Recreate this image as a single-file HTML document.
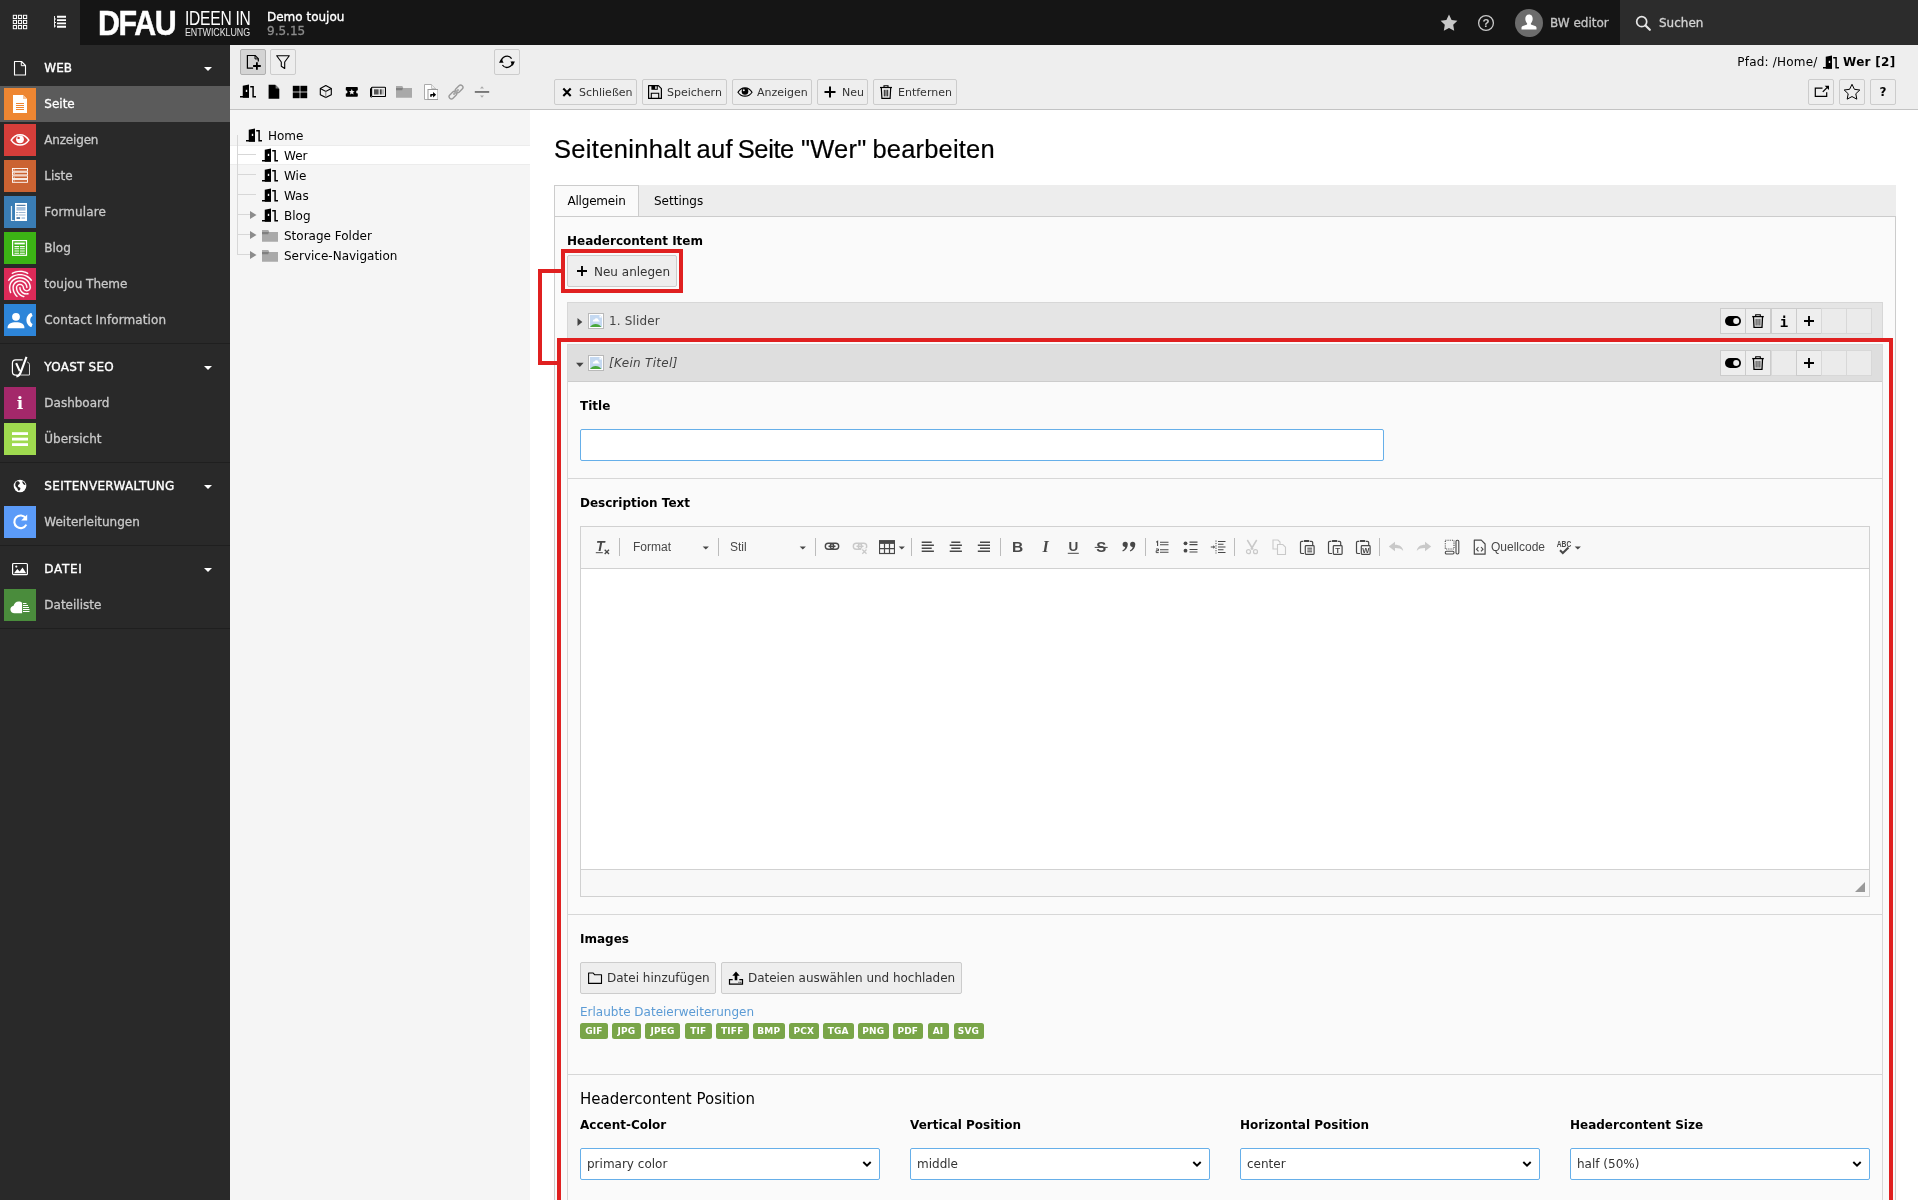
<!DOCTYPE html>
<html lang="de">
<head>
<meta charset="utf-8">
<title>Demo toujou [TYPO3 CMS 9.5.15]</title>
<style>
*{box-sizing:border-box;margin:0;padding:0}
html,body{width:1918px;height:1200px;overflow:hidden;background:#fff}
body{font-family:"DejaVu Sans","Liberation Sans",sans-serif;font-size:12px;line-height:18px;color:#000;position:relative}
.abs{position:absolute}
svg{display:block}
/* ---------- topbar ---------- */
#topbar{position:absolute;left:0;top:0;width:1918px;height:45px;background:#151515}
#tb-left{position:absolute;left:0;top:0;width:80px;height:45px;background:#292929}
#site{position:absolute;left:267px;top:10px;color:#fff;font-size:12px;line-height:14px;-webkit-text-stroke:.35px #fff}
#site span{display:block;color:#8c8c8c;-webkit-text-stroke:.3px #8c8c8c}
#user{-webkit-text-stroke:.3px #c5c5c5;position:absolute;left:1550px;top:0;line-height:47px;color:#c5c5c5;font-size:12px}
#search{position:absolute;left:1620px;top:0;width:298px;height:45px;background:#2c2c2c}
#search span{-webkit-text-stroke:.3px #d4d4d4;position:absolute;left:39px;top:0;line-height:47px;color:#d4d4d4;font-size:12px}
/* ---------- module menu ---------- */
#menu{position:absolute;left:0;top:45px;width:230px;height:1155px;background:#292929;color:#fff}
.grp{border-bottom:1px solid #1f1f1f;padding-bottom:5px;position:relative}
.gh{height:41px;position:relative;font-size:12px;line-height:46px;padding-left:44.300px;-webkit-text-stroke:.35px #fff}
.gh .ic{position:absolute;left:12px;top:15px;width:16px;height:16px}
.gh .car{position:absolute;left:204px;top:22px;width:0;height:0;border-left:4px solid transparent;border-right:4px solid transparent;border-top:4px solid #fff}
.mi{height:36px;position:relative;line-height:36px;padding-left:44.300px;color:#c9c9c9;font-size:12px;-webkit-text-stroke:.3px #c9c9c9}
.mi.act{background:#5b5b5b;color:#fff;-webkit-text-stroke:.3px #fff}
.mi .ib{position:absolute;left:4px;top:2px;width:32px;height:32px}

/* ---------- tree ---------- */
#tree{position:absolute;left:230px;top:45px;width:300px;height:1155px;background:#f5f5f5}
#tree-tb{position:absolute;left:0;top:0;width:300px;height:65px;background:#eee;border-bottom:1px solid #c3c3c3}
.tbtn{position:absolute;width:26px;height:26px;border:1px solid #ccc;border-radius:2px;background:#eee}
.tbtn.on{background:#d4d4d4;border-color:#b0b0b0}
.sel{position:absolute;left:0;top:100px;width:300px;height:20px;background:#fff;border-top:1px solid #ececec;border-bottom:1px solid #ececec}
.vl{position:absolute;left:7px;top:90px;width:1px;height:120px;background:#d7d7d7}
.hl{position:absolute;left:7px;height:1px;background:#d7d7d7}
.tn{position:absolute;font-size:12px;line-height:20px;height:20px;color:#000;white-space:nowrap}
/* ---------- docheader ---------- */
#doch{position:absolute;left:530px;top:45px;width:1388px;height:65px;background:#eee;border-bottom:1px solid #c3c3c3}
.path{position:absolute;right:22.500px;top:8px;font-size:12px;line-height:18px;color:#000;white-space:nowrap;letter-spacing:.2px}
.path b{letter-spacing:.3px}
.path i{display:inline-block;vertical-align:-4.500px;margin:0 4.500px 0 1px}
.btn{position:absolute;top:34px;height:26px;border:1px solid #ccc;border-radius:2px;background:#eee;color:#333;font-size:11px;line-height:24px;white-space:nowrap}
.btn span{position:absolute;top:1px}
#main{position:absolute;left:530px;top:110px;width:1388px;height:1090px;background:#fff;overflow:hidden}
h1{position:absolute;left:24px;top:21px;width:460px;height:36px;font-family:"Liberation Sans",sans-serif;font-weight:normal;font-size:25.500px;line-height:36px;white-space:nowrap;color:#000;-webkit-text-stroke:.2px #000}
#tabs{position:absolute;left:24px;top:75px;width:1342px;height:31px;background:#ededed}
.tab{letter-spacing:-.2px;position:absolute;left:0;top:0;height:32px;width:85px;background:#fafafa;border:1px solid #ccc;border-bottom:0;line-height:31px;text-align:center}
.tab2{position:absolute;left:100px;top:0;line-height:33px}
#panel{position:absolute;left:24px;top:106px;width:1342px;height:1000px;background:#fafafa;border:1px solid #ccc}
.lbl{position:absolute;font-weight:bold;font-size:12px;line-height:18px;white-space:nowrap}
#neu{left:12px;top:38px;width:110px;height:32px;line-height:30px;font-size:12px}
#it1{position:absolute;left:12px;top:85px;width:1316px;height:38px;background:#e5e5e5;border:1px solid #d7d7d7;color:#444}
#it1 span{position:absolute;left:41px;top:9px;letter-spacing:.15px}
#it2{position:absolute;left:12px;top:127px;width:1316px;height:900px;background:#fafafa;border:1px solid #d7d7d7}
#it2h{position:absolute;left:0;top:0;width:1314px;height:37px;background:#dedede;border-bottom:1px solid #ccc;color:#444}
#it2h span{position:absolute;left:41px;top:9px;font-style:italic;letter-spacing:.3px}
.sec{position:absolute;left:0;width:1314px;border-bottom:1px solid #d7d7d7}
.inp{position:absolute;height:32px;background:#fff;border:1px solid #66afe9;border-radius:2px}
#cke{position:absolute;left:12px;top:47px;width:1290px;height:371px;border:1px solid #d1d1d1;background:#fff}
#cketop{position:absolute;left:0;top:0;width:1288px;height:42px;background:#f8f8f8;border-bottom:1px solid #d1d1d1;font-family:"Liberation Sans",sans-serif;font-size:12px;color:#484848}
.ckt{position:absolute;top:12px;line-height:16px}
#ckebody{position:absolute;left:0;top:342px;width:1288px;height:27px;background:#f8f8f8;border-top:1px solid #d1d1d1}
.b2{height:32px;line-height:28px;font-size:12px}
.lnk{position:absolute;color:#5b9bd5;font-size:12px;line-height:18px}
.exts{position:absolute;left:12px;top:108px;white-space:nowrap;font-size:0;height:16px;width:500px}
.exts b{position:absolute;top:0;display:block;background:#79a548;color:#fff;font-size:9px;line-height:16.500px;height:15.500px;text-align:center;border-radius:2.500px;letter-spacing:.15px}
.leg{position:absolute;left:12px;top:13px;font-size:15px;line-height:22px}
.selb span{position:absolute;left:6px;top:6px;color:#333}
#red1{position:absolute;left:31px;top:139px;width:122px;height:44px;border:4px solid #e02020}
#red2{position:absolute;left:8px;top:159px;width:23px;height:96px;border:4px solid #e02020;border-right:0}
#red3{position:absolute;left:27px;top:228px;width:1336px;height:900px;border:4px solid #e02020}

i{font-style:normal;display:block}
#logo{position:absolute;left:100px;top:0;height:45px;color:#fff;font-family:"Liberation Sans",sans-serif}
#logo span{position:absolute;white-space:nowrap;transform-origin:0 0}
.l1{left:-2.300px;top:2.300px;font-weight:bold;font-size:34.500px;line-height:40px;letter-spacing:-1.500px;transform:scale(.880,1.020);-webkit-text-stroke:.5px #fff}
.l2{left:85px;top:5.700px;font-size:19.600px;line-height:24px;transform:scale(.795,1.020);letter-spacing:-.3px}
.l3{left:85px;top:26px;font-size:10.500px;line-height:12px;transform:scale(.850,1.030);color:#e4e4e4;letter-spacing:-.1px}

.cb{position:absolute;width:26px;height:26px;border:1px solid #ccc;background:#eee}
.cb.dis{background:#ebebeb;border-color:#d8d8d8}
.cks{position:absolute;top:11px;width:1px;height:18px;background:#bcbcbc}
#topbar,#menu,#tree,#doch,#main{will-change:transform}
h1 span{position:absolute;top:0;white-space:pre}
</style>
</head>
<body>
<div id="topbar">
  <div id="tb-left"><i class="abs" style="left:12px;top:14px"><svg width="16" height="16" viewBox="0 0 16 16" ><rect x="1.3" y="1.3" width="3.200" height="3.200" fill="none" stroke="#fff" stroke-width="1"/><rect x="1.3" y="6.3999999999999995" width="3.200" height="3.200" fill="none" stroke="#fff" stroke-width="1"/><rect x="1.3" y="11.5" width="3.200" height="3.200" fill="none" stroke="#fff" stroke-width="1"/><rect x="6.3999999999999995" y="1.3" width="3.200" height="3.200" fill="none" stroke="#fff" stroke-width="1"/><rect x="6.3999999999999995" y="6.3999999999999995" width="3.200" height="3.200" fill="none" stroke="#fff" stroke-width="1"/><rect x="6.3999999999999995" y="11.5" width="3.200" height="3.200" fill="none" stroke="#fff" stroke-width="1"/><rect x="11.5" y="1.3" width="3.200" height="3.200" fill="none" stroke="#fff" stroke-width="1"/><rect x="11.5" y="6.3999999999999995" width="3.200" height="3.200" fill="none" stroke="#fff" stroke-width="1"/><rect x="11.5" y="11.5" width="3.200" height="3.200" fill="none" stroke="#fff" stroke-width="1"/></svg></i><i class="abs" style="left:52px;top:14px"><svg width="16" height="16" viewBox="0 0 16 16" ><path d="M2.500 2v11.500M2.500 5h1.500M2.500 8.500h1.500M2.500 12h1.500" stroke="#fff" stroke-width=".9" fill="none"/><path d="M5 2.800h9M5 6.100h9M5 9.400h9M5 12.700h9" stroke="#fff" stroke-width="1.900"/></svg></i></div>
  <div id="logo"><span class="l1">DFAU</span><span class="l2">IDEEN IN</span><span class="l3">ENTWICKLUNG</span></div>
  <div id="site">Demo toujou<span>9.5.15</span></div>
  <i class="abs" style="left:1440px;top:14px"><svg width="18" height="18" viewBox="0 0 18 18" ><path d="M9 .6l2.600 5.300 5.800.85-4.200 4.100 1 5.800L9 13.900 3.800 16.650l1-5.800L.6 6.750l5.800-.85z" fill="#c8c8c8"/></svg></i>
  <i class="abs" style="left:1477px;top:14px"><svg width="18" height="18" viewBox="0 0 18 18" ><circle cx="9" cy="9" r="7.400" fill="none" stroke="#c8c8c8" stroke-width="1.300"/><text x="9" y="13" text-anchor="middle" font-family="Liberation Sans,sans-serif" font-weight="bold" font-size="11.500" fill="#c8c8c8">?</text></svg></i>
  <i class="abs" style="left:1515px;top:9px"><svg width="28" height="28" viewBox="0 0 28 28" ><circle cx="14" cy="14" r="14" fill="#6c6c6c"/><path d="M14 5.500c2.300 0 3.700 1.700 3.700 4.300 0 1.900-.8 3.600-1.800 4.400v1.200l4.200 1.500c.9.300 1.400 1 1.400 1.900v1.700h-15v-1.700c0-.9.500-1.600 1.400-1.900l4.200-1.500v-1.200c-1-.8-1.800-2.500-1.800-4.400 0-2.600 1.400-4.300 3.700-4.300z" fill="#fff"/></svg></i>
  <div id="user">BW editor</div>
  <div id="search"><i class="abs" style="left:15px;top:15px"><svg width="16" height="16" viewBox="0 0 16 16" ><circle cx="6.700" cy="6.700" r="5" fill="none" stroke="#e6e6e6" stroke-width="1.700"/><path d="M10.500 10.500l4.300 4.300" stroke="#e6e6e6" stroke-width="2.200" stroke-linecap="round"/></svg></i><span>Suchen</span></div>
</div>
<div id="menu">
  <div class="grp">
    <div class="gh"><i class="ic"><svg width="16" height="16" viewBox="0 0 16 16" ><path d="M2.500 1.500h7L13.500 5.500v9.500h-11z" fill="none" stroke="#fff" stroke-width="1.100" stroke-linejoin="round"/><path d="M9.300 1.700v4h4" fill="none" stroke="#fff" stroke-width="1"/></svg></i>WEB<i class="car"></i></div>
    <div class="mi act"><div class="ib" style="background:#ee8632"><svg width="32" height="32" viewBox="0 0 32 32" ><path d="M9 7h10l4 4v14H9z" fill="#fff"/><path d="M19 7l4 4h-4z" fill="#f7c49c"/><path d="M12 15.500h8M12 17.500h8M12 19.500h8M12 21.500h8" stroke="#ee8632" stroke-width="1"/></svg></div>Seite</div>
    <div class="mi"><div class="ib" style="background:#d63e3a"><svg width="32" height="32" viewBox="0 0 32 32" ><path d="M7.200 16.200c2.200-3.700 5.300-5.500 8.800-5.500s6.600 1.800 8.800 5.500c-2.200 3.300-5.300 4.900-8.800 4.900s-6.600-1.600-8.800-4.900z" fill="none" stroke="#fff" stroke-width="1.500"/><circle cx="16" cy="15.300" r="3.900" fill="#fff"/><circle cx="14.600" cy="13.900" r="1.200" fill="#d63e3a"/></svg></div><span style="letter-spacing:-.18px">Anzeigen</span></div>
    <div class="mi"><div class="ib" style="background:#cb6332"><svg width="32" height="32" viewBox="0 0 32 32" ><rect x="8.500" y="8.5" width="15" height="2.700" fill="none" stroke="#fff" stroke-width=".9"/><rect x="9.700" y="9.4" width=".9" height=".9" fill="#fff"/><rect x="8.500" y="12.2" width="15" height="2.700" fill="none" stroke="#fff" stroke-width=".9"/><rect x="9.700" y="13.100000000000001" width=".9" height=".9" fill="#fff"/><rect x="8.500" y="15.9" width="15" height="2.700" fill="none" stroke="#fff" stroke-width=".9"/><rect x="9.700" y="16.8" width=".9" height=".9" fill="#fff"/><rect x="8.500" y="19.6" width="15" height="2.700" fill="none" stroke="#fff" stroke-width=".9"/><rect x="9.700" y="20.5" width=".9" height=".9" fill="#fff"/></svg></div>Liste</div>
    <div class="mi"><div class="ib" style="background:#3a7db5"><svg width="32" height="32" viewBox="0 0 32 32" ><path d="M7.500 10v14.500h3" stroke="#fff" stroke-width="1.200" fill="none" opacity=".85"/><rect x="11" y="7" width="12" height="18" fill="#fff"/><rect x="12.500" y="8.800" width="9" height="1" fill="#2c5f92"/><rect x="12.500" y="11" width="9" height="3.600" fill="#a9c4e0"/><path d="M14.500 16.500h7M14.500 19h7" stroke="#9db7d3" stroke-width="1"/><path d="M12.500 16.500h1M12.500 19h1" stroke="#2c5f92" stroke-width="1"/><rect x="12.500" y="21.300" width="3.600" height="1.500" fill="#2c5f92"/><rect x="17.500" y="21.300" width="3.600" height="1.500" fill="#a9c4e0"/></svg></div><span style="letter-spacing:.14px">Formulare</span></div>
    <div class="mi"><div class="ib" style="background:#3cb415"><svg width="32" height="32" viewBox="0 0 32 32" ><rect x="8.600" y="8.600" width="13.900" height="14.700" fill="none" stroke="#fff" stroke-width="1.200"/><rect x="10.400" y="10.600" width="10.400" height="1.800" fill="#fff"/><path d="M10.400 14.600h4.800M10.400 16.800h4.800M10.400 19h4.800M10.400 21.200h4.800M16 14.600h4.800M16 16.800h4.800M16 19h4.800M16 21.200h4.800" stroke="#fff" stroke-width="1.100"/></svg></div>Blog</div>
    <div class="mi"><div class="ib" style="background:#dc2a58"><svg width="32" height="32" viewBox="0 0 24 24" ><path d="M17.81 4.47c-.08 0-.16-.02-.23-.06C15.66 3.42 14 3 12.01 3c-1.98 0-3.86.47-5.57 1.41-.24.13-.54.04-.68-.2-.13-.24-.04-.55.2-.68C7.82 2.52 9.86 2 12.01 2c2.13 0 3.99.47 6.03 1.52.25.13.34.43.21.67-.09.18-.26.28-.44.28zM3.5 9.72c-.1 0-.2-.03-.29-.09-.23-.16-.28-.47-.12-.7.99-1.4 2.25-2.5 3.75-3.27C9.980 4.040 14 4.030 17.150 5.650c1.500.77 2.760 1.860 3.750 3.250.16.220.11.540-.12.700-.23.160-.54.110-.7-.12-.9-1.260-2.040-2.250-3.390-2.940-2.870-1.470-6.540-1.470-9.400.01-1.360.7-2.500 1.700-3.400 2.960-.8.14-.23.210-.39.210zm6.250 12.070c-.13 0-.26-.05-.35-.15-.87-.87-1.340-1.430-2.010-2.640-.69-1.230-1.050-2.730-1.050-4.340 0-2.970 2.540-5.390 5.660-5.390s5.660 2.420 5.660 5.390c0 .28-.22.5-.5.5s-.5-.22-.5-.5c0-2.420-2.090-4.390-4.660-4.390-2.570 0-4.660 1.970-4.660 4.390 0 1.440.32 2.770.93 3.850.64 1.150 1.080 1.640 1.850 2.420.19.2.19.51 0 .71-.11.1-.24.15-.37.15zm7.170-1.850c-1.190 0-2.240-.3-3.100-.89-1.490-1.010-2.380-2.650-2.380-4.390 0-.28.22-.5.5-.5s.5.22.5.5c0 1.410.72 2.740 1.940 3.560.71.48 1.540.71 2.540.71.240 0 .64-.03 1.040-.1.270-.05.53.13.58.41.05.27-.13.53-.41.58-.57.11-1.070.12-1.210.12zM14.910 22c-.04 0-.09-.01-.13-.02-1.590-.44-2.630-1.030-3.720-2.100-1.400-1.390-2.170-3.240-2.170-5.220 0-1.620 1.380-2.940 3.080-2.940 1.700 0 3.080 1.320 3.080 2.940 0 1.070.93 1.940 2.080 1.940s2.080-.87 2.080-1.940c0-3.770-3.250-6.830-7.250-6.830-2.840 0-5.440 1.580-6.610 4.030-.39.81-.59 1.760-.59 2.800 0 .78.070 2.010.67 3.610.1.260-.03.55-.29.64-.26.1-.55-.04-.64-.29-.49-1.310-.73-2.610-.73-3.960 0-1.200.23-2.290.68-3.240 1.330-2.790 4.280-4.600 7.510-4.600 4.550 0 8.250 3.510 8.250 7.830 0 1.620-1.380 2.940-3.080 2.940s-3.080-1.320-3.080-2.940c0-1.070-.93-1.940-2.080-1.940s-2.080.87-2.080 1.940c0 1.710.66 3.310 1.870 4.510.95.94 1.860 1.460 3.270 1.850.27.070.42.35.35.61-.5.230-.26.380-.47.380z" fill="#fff" stroke="#fff" stroke-width=".1"/></svg></div>toujou Theme</div>
    <div class="mi"><div class="ib" style="background:#2d85d9"><svg width="32" height="32" viewBox="0 0 32 32" ><circle cx="12" cy="12.800" r="3.900" fill="#fff"/><path d="M3.600 23.500c0-3.300 3.500-5.200 8.400-5.200s8.400 1.900 8.400 5.200v.700H3.600z" fill="#fff"/><path d="M27.600 9.300l1 2.600c-1.700 1-2.400 2.400-2.400 4.100s.7 3.100 2.400 4.100l-1 2.600c-.2.400-.6.500-1 .3-2.700-1.500-4.200-4-4.200-7s1.500-5.500 4.200-7c.400-.2.800-.1 1 .3z" fill="#fff"/></svg></div><span style="letter-spacing:.1px">Contact Information</span></div>
  </div>
  <div class="grp">
    <div class="gh"><i class="ic" style="left:9.500px;top:11.500px"><svg width="22" height="22" viewBox="0 0 20 20" ><path d="M11.500 3.500H5.200c-1.700 0-3 1.300-3 3v7.800c0 1.700 1.300 3 3 3h1.300" fill="none" stroke="#fff" stroke-width="1.100"/><path d="M15.600 5.500c1.300.2 2.100 1.200 2.100 2.500v9.300H9.500" fill="none" stroke="#ddd" stroke-width=".9"/><path d="M5.600 6.500l3.300 7.300M15 .8L9.800 14.600c-.8 2.300-1.900 3.700-4 3.900" fill="none" stroke="#fff" stroke-width="1.900"/></svg></i><span style="letter-spacing:.24px">YOAST SEO</span><i class="car"></i></div>
    <div class="mi"><div class="ib" style="background:#a4286a"><svg width="32" height="32" viewBox="0 0 32 32" ><text x="16" y="21.500" text-anchor="middle" font-family="DejaVu Serif,Liberation Serif,serif" font-weight="bold" font-size="17" fill="#fff">i</text></svg></div>Dashboard</div>
    <div class="mi"><div class="ib" style="background:#9fda4f"><svg width="32" height="32" viewBox="0 0 32 32" ><rect x="8" y="9.200" width="16" height="2.800" fill="#fff"/><rect x="8" y="14.700" width="16" height="2.800" fill="#fff"/><rect x="8" y="20.200" width="16" height="2.800" fill="#fff"/></svg></div>Übersicht</div>
  </div>
  <div class="grp">
    <div class="gh"><i class="ic"><svg width="16" height="16" viewBox="0 0 16 16" ><circle cx="8" cy="8" r="6.300" fill="#fff"/><path d="M4.500 3.500c1.500-.5 3 .3 3.300 1.500.3 1.200-1.300 1.500-1.800 2.500s.8 1.700 1.800 2 .7 1.800-.2 2.700c-.9.900-1.600.3-1.900-1s-1.900-2-2.300-3.200.1-3.700 1.100-4.500zM10.500 3.300c1.500.6 2.700 2 3 3.700-.8.300-1.600-.2-2.200-1s-1.300-1.500-.8-2.700z" fill="#292929"/></svg></i><span style="letter-spacing:.33px">SEITENVERWALTUNG</span><i class="car"></i></div>
    <div class="mi"><div class="ib" style="background:#5b9bf8"><svg width="32" height="32" viewBox="0 0 32 32" ><path d="M21.800 12.200a6.300 6.300 0 10.500 6.400" fill="none" stroke="#fff" stroke-width="2.100"/><path d="M23.200 8.500v6h-6z" fill="#fff"/></svg></div>Weiterleitungen</div>
  </div>
  <div class="grp">
    <div class="gh"><i class="ic"><svg width="16" height="16" viewBox="0 0 16 16" ><rect x=".600" y="2.500" width="14.800" height="11.200" rx="1" fill="none" stroke="#fff" stroke-width="1.200"/><path d="M2 12.300l3.300-4.300 2.400 2.600 2.800-4 3.700 5.700z" fill="#fff"/><circle cx="4.300" cy="5.600" r="1.100" fill="#fff"/></svg></i><span style="letter-spacing:.69px">DATEI</span><i class="car"></i></div>
    <div class="mi"><div class="ib" style="background:#4a8c3c"><svg width="32" height="32" viewBox="0 0 32 32" ><path d="M10.500 24.300c-2.300 0-4.100-1.700-4.100-3.800 0-1.900 1.400-3.400 3.200-3.700.4-2.500 2.500-4.400 5.100-4.400 1.300 0 2.500.5 3.400 1.300v10.600z" fill="#fff"/><path d="M19 14.500h3.500M19 16.500h5M19 18.500h6M19 20.500h6.500M19 22.500h6.500" stroke="#fff" stroke-width="1"/></svg></div>Dateiliste</div>
  </div>
</div>
<div id="tree">
  <div id="tree-tb">
    <div class="tbtn on" style="left:10px;top:4px"><i class="abs" style="left:4px;top:4px"><svg width="16" height="16" viewBox="0 0 16 16" ><path d="M13.300 7.600V4.700L10.200 1.500H2.400v12.700h5.700" fill="none" stroke="#000" stroke-width="1.200"/><path d="M10 1.600v3.300h3.200" fill="none" stroke="#000" stroke-width="1"/><path d="M11.900 8.200v7.600M8.100 12h7.700" stroke="#000" stroke-width="1.800"/></svg></i></div>
    <div class="tbtn" style="left:40px;top:4px"><i class="abs" style="left:4px;top:4px"><svg width="16" height="16" viewBox="0 0 16 16" ><path d="M1.700 1.700h12.600L9.700 8v6.500L6.300 12.300V8z" fill="none" stroke="#000" stroke-width="1.100" stroke-linejoin="round"/></svg></i></div>
    <div class="tbtn" style="left:264px;top:4px"><i class="abs" style="left:4px;top:4px"><svg width="16" height="16" viewBox="0 0 16 16" ><path d="M2.400 7.800A5.600 5.600 0 0112.600 4.600" fill="none" stroke="#000" stroke-width="1.300"/><path d="M13.600 7.800A5.600 5.600 0 013.400 11" fill="none" stroke="#000" stroke-width="1.300"/><path d="M0 8.700h4.600L2.300 4.500zM11.500 7.400h4.400L13.700 12z" fill="#000"/></svg></i></div>
    <i class="abs" style="left:10px;top:39px"><svg width="16" height="16" viewBox="0 0 16 16" ><path d="M2.750 1.750L9 .5v13.250H2.750z" fill="#000"/><rect x="5.800" y="5.800" width="1.400" height="2.200" fill="#eee"/><path d="M10.200 2.650h2.900V12.750H16" fill="none" stroke="#000" stroke-width="1.500"/><path d="M0 12.750h9" stroke="#000" stroke-width="1.500"/></svg></i>
    <i class="abs" style="left:36px;top:39px"><svg width="16" height="16" viewBox="0 0 16 16" ><path d="M2.6 .8h6.6L13.3 5v9.8H2.6z" fill="#000"/><path d="M9.6 .8L13.3 4.6H9.6z" fill="#777"/></svg></i>
    <i class="abs" style="left:62px;top:39px"><svg width="16" height="16" viewBox="0 0 16 16" ><rect x=".8" y="1.8" width="6.8" height="5.8"/><rect x="8.4" y="1.8" width="6.8" height="5.8"/><rect x=".8" y="8.4" width="6.8" height="5.8"/><rect x="8.4" y="8.4" width="6.8" height="5.8"/></svg></i>
    <i class="abs" style="left:88px;top:39px"><svg width="16" height="16" viewBox="0 0 16 16" ><path d="M7.8 1.6l5.5 2.9v6.2l-5.5 2.9-5.5-2.9V4.5z" fill="none" stroke="#000" stroke-width="1.1" stroke-linejoin="round"/><path d="M2.3 4.5l5.5 2.9 5.5-2.9" fill="none" stroke="#000" stroke-width="1.1"/><path d="M7.8 7.4v6.2" stroke="#888" stroke-width="1"/></svg></i>
    <i class="abs" style="left:114px;top:39px"><svg width="16" height="16" viewBox="0 0 16 16" ><path d="M2.6 3h10.4c.5 0 .8.3.8.8v2.4a1.7 1.7 0 000 3.4v2.4c0 .5-.3.8-.8.8H2.6c-.5 0-.8-.3-.8-.8V9.600a1.700 1.700 0 000-3.400V3.800c0-.5.3-.8.800-.8z" fill="#000"/><path d="M7.800 5.100l.850 1.800 1.950.250-1.450 1.350.4 1.950-1.750-.98-1.750.98.400-1.950-1.450-1.350 1.950-.250z" fill="#eee"/></svg></i>
    <i class="abs" style="left:140px;top:39px"><svg width="16" height="16" viewBox="0 0 16 16" ><rect x="1.6" y="3.200" width="13.900" height="9.300" rx=".8" fill="none" stroke="#000" stroke-width="1.1"/><path d="M1.6 3.600L.5 4.600v8.200l1 .6" fill="none" stroke="#000" stroke-width="1"/><rect x="4" y="5.300" width="4.600" height="5.200" fill="#555"/><rect x="9.800" y="5.300" width="1.900" height="5.200" fill="#444"/><rect x="12.400" y="5.300" width="1.200" height="5.200" fill="#999"/></svg></i>
    <i class="abs" style="left:166px;top:39px"><svg width="16" height="16" viewBox="0 0 16 16" ><path d="M0 2h6.300l1 2H16v9.800H0z" fill="#a9a9a9"/><path d="M0 4h7l-.8 2.300H0z" fill="#808080"/></svg></i>
    <i class="abs" style="left:192px;top:39px"><svg width="16" height="16" viewBox="0 0 16 16" ><path d="M2.500 .5h7L13.500 4.500v11H2.500z" fill="#fff" stroke="#aaa" stroke-width="1"/><path d="M9.500 .5v4h4" fill="#eee" stroke="#bbb" stroke-width=".8"/><rect x="6" y="5.500" width="10" height="10" fill="#fff" stroke="#999" stroke-width="1"/><path d="M8.200 12.800v-1.900c0-.6.400-1 1-1h1.900V8l3 2.700-3 2.700v-1.800H9.700v1.200z" fill="#000"/></svg></i>
    <i class="abs" style="left:218px;top:39px"><svg width="16" height="16" viewBox="0 0 16 16" ><g fill="none" stroke="#9a9a9a" stroke-width="1.400" transform="rotate(-45 8 8)"><rect x="-.8" y="5.700" width="8.800" height="4.600" rx="2.300"/><rect x="8" y="5.700" width="8.800" height="4.600" rx="2.300"/></g><path d="M6 10l4-4" stroke="#a8a8a8" stroke-width="2" stroke-linecap="round"/></svg></i>
    <i class="abs" style="left:244px;top:39px"><svg width="16" height="16" viewBox="0 0 16 16" ><rect x=".8" y="7" width="14.400" height="1.900" fill="#777"/><path d="M8 2.300l2 2.300H6zM8 13.700l2-2.300H6z" fill="#aaa"/></svg></i>
  </div>
  <div class="sel"></div>
  <div class="vl"></div>
  <div class="hl" style="top:109px;width:19px"></div>
  <div class="hl" style="top:129px;width:19px"></div>
  <div class="hl" style="top:149px;width:19px"></div>
  <div class="hl" style="top:169px;width:13px"></div>
  <div class="hl" style="top:189px;width:13px"></div>
  <div class="hl" style="top:209px;width:13px"></div>
  <i class="abs" style="left:16px;top:83px"><svg width="16" height="16" viewBox="0 0 16 16" ><path d="M2.750 1.750L9 .5v13.250H2.750z" fill="#000"/><rect x="5.800" y="5.800" width="1.400" height="2.200" fill="#eee"/><path d="M10.200 2.650h2.900V12.750H16" fill="none" stroke="#000" stroke-width="1.500"/><path d="M0 12.750h9" stroke="#000" stroke-width="1.500"/></svg></i>
  <i class="abs" style="left:32px;top:103px"><svg width="16" height="16" viewBox="0 0 16 16" ><path d="M2.750 1.750L9 .5v13.250H2.750z" fill="#000"/><rect x="5.800" y="5.800" width="1.400" height="2.200" fill="#fff"/><path d="M10.200 2.650h2.900V12.750H16" fill="none" stroke="#000" stroke-width="1.500"/><path d="M0 12.750h9" stroke="#000" stroke-width="1.500"/></svg></i>
  <i class="abs" style="left:32px;top:123px"><svg width="16" height="16" viewBox="0 0 16 16" ><path d="M2.750 1.750L9 .5v13.250H2.750z" fill="#000"/><rect x="5.800" y="5.800" width="1.400" height="2.200" fill="#eee"/><path d="M10.200 2.650h2.900V12.750H16" fill="none" stroke="#000" stroke-width="1.500"/><path d="M0 12.750h9" stroke="#000" stroke-width="1.500"/></svg></i>
  <i class="abs" style="left:32px;top:143px"><svg width="16" height="16" viewBox="0 0 16 16" ><path d="M2.750 1.750L9 .5v13.250H2.750z" fill="#000"/><rect x="5.800" y="5.800" width="1.400" height="2.200" fill="#eee"/><path d="M10.200 2.650h2.900V12.750H16" fill="none" stroke="#000" stroke-width="1.500"/><path d="M0 12.750h9" stroke="#000" stroke-width="1.500"/></svg></i>
  <i class="abs" style="left:32px;top:163px"><svg width="16" height="16" viewBox="0 0 16 16" ><path d="M2.750 1.750L9 .5v13.250H2.750z" fill="#000"/><rect x="5.800" y="5.800" width="1.400" height="2.200" fill="#eee"/><path d="M10.200 2.650h2.900V12.750H16" fill="none" stroke="#000" stroke-width="1.500"/><path d="M0 12.750h9" stroke="#000" stroke-width="1.500"/></svg></i>
  <i class="abs" style="left:32px;top:183px"><svg width="16" height="16" viewBox="0 0 16 16" ><path d="M0 2h6.300l1 2H16v9.800H0z" fill="#a9a9a9"/><path d="M0 4h7l-.8 2.300H0z" fill="#808080"/></svg></i>
  <i class="abs" style="left:32px;top:203px"><svg width="16" height="16" viewBox="0 0 16 16" ><path d="M0 2h6.300l1 2H16v9.800H0z" fill="#a9a9a9"/><path d="M0 4h7l-.8 2.300H0z" fill="#808080"/></svg></i>
  <i class="abs" style="left:20px;top:166px"><svg width="8" height="8" viewBox="0 0 8 8" ><path d="M0 0l6.500 4L0 8z" fill="#8c8c8c"/></svg></i>
  <i class="abs" style="left:20px;top:186px"><svg width="8" height="8" viewBox="0 0 8 8" ><path d="M0 0l6.500 4L0 8z" fill="#8c8c8c"/></svg></i>
  <i class="abs" style="left:20px;top:206px"><svg width="8" height="8" viewBox="0 0 8 8" ><path d="M0 0l6.500 4L0 8z" fill="#8c8c8c"/></svg></i>
  <div class="tn" style="top:81px;left:38px">Home</div>
  <div class="tn" style="top:101px;left:54px">Wer</div>
  <div class="tn" style="top:121px;left:54px">Wie</div>
  <div class="tn" style="top:141px;left:54px">Was</div>
  <div class="tn" style="top:161px;left:54px">Blog</div>
  <div class="tn" style="top:181px;left:54px">Storage Folder</div>
  <div class="tn" style="top:201px;left:54px">Service-Navigation</div>
</div>
<div id="doch">
  <div class="path">Pfad: /Home/ <i><svg width="16" height="16" viewBox="0 0 16 16" ><path d="M2.750 1.750L9 .5v13.250H2.750z" fill="#000"/><rect x="5.800" y="5.800" width="1.400" height="2.200" fill="#eee"/><path d="M10.200 2.650h2.900V12.750H16" fill="none" stroke="#000" stroke-width="1.500"/><path d="M0 12.750h9" stroke="#000" stroke-width="1.500"/></svg></i><b>Wer [2]</b></div>
  <div class="btn" style="left:24px;width:83px"><i class="abs" style="left:4px;top:4px"><svg width="16" height="16" viewBox="0 0 16 16" ><path d="M4.300 4.600l7.400 7.400M11.700 4.600l-7.400 7.400" stroke="#000" stroke-width="2.100"/></svg></i><span style="left:24px">Schließen</span></div>
  <div class="btn" style="left:112px;width:85px"><i class="abs" style="left:4px;top:4px"><svg width="16" height="16" viewBox="0 0 16 16" ><path d="M1.600 1.600h9.800l3 3v9.800H1.600z" fill="none" stroke="#000" stroke-width="1.200" stroke-linejoin="round"/><path d="M4.400 1.600v4.200h6.400V1.600" fill="#000"/><rect x="8.200" y="2.300" width="1.500" height="2.600" fill="#eee"/><path d="M4.300 14.400V9.300h7.400v5.100" fill="none" stroke="#000" stroke-width="1.100"/></svg></i><span style="left:24px">Speichern</span></div>
  <div class="btn" style="left:202px;width:80px"><i class="abs" style="left:4px;top:4px"><svg width="16" height="16" viewBox="0 0 16 16" ><path d="M1 8.200c1.700-2.900 4.200-4.400 7-4.400s5.300 1.500 7 4.400c-1.700 2.700-4.200 4-7 4s-5.300-1.300-7-4z" fill="none" stroke="#000" stroke-width="1.200"/><circle cx="8" cy="7.400" r="3.300" fill="#000"/><circle cx="6.800" cy="6.200" r="1" fill="#eee"/></svg></i><span style="left:24px">Anzeigen</span></div>
  <div class="btn" style="left:287px;width:51px"><i class="abs" style="left:4px;top:4px"><svg width="16" height="16" viewBox="0 0 16 16" ><path d="M8 2.500v11M2.500 8h11" stroke="#000" stroke-width="2"/></svg></i><span style="left:24px">Neu</span></div>
  <div class="btn" style="left:343px;width:84px"><i class="abs" style="left:4px;top:4px"><svg width="16" height="16" viewBox="0 0 16 16" ><path d="M2 3.500h12" stroke="#000" stroke-width="1.200"/><path d="M6 3.300V1.800h4v1.500" fill="none" stroke="#000" stroke-width="1.100"/><path d="M3.300 3.800l.6 10.600h8.200l.6-10.600" fill="none" stroke="#000" stroke-width="1.200"/><path d="M6.300 5.800v6.600M8 5.800v6.600M9.700 5.800v6.600" stroke="#000" stroke-width=".9"/></svg></i><span style="left:24px">Entfernen</span></div>
  <div class="btn" style="left:1278px;width:26px"><i class="abs" style="left:4px;top:4px"><svg width="16" height="16" viewBox="0 0 16 16" ><path d="M13.700 8.300v4H2.300V4.200h7.200" fill="none" stroke="#000" stroke-width="1.200"/><path d="M11.700 1.700H16V6z" fill="#000"/><path d="M14.800 2.900L9.800 7.900" stroke="#000" stroke-width="1.300"/></svg></i></div>
  <div class="btn" style="left:1309px;width:26px"><i class="abs" style="left:4px;top:4px"><svg width="16" height="16" viewBox="0 0 16 16" ><path d="M8 .3l2.400 5 5.400.7-4 3.750 1 5.400L8 12.550 3.200 15.150l1-5.400L.2 6l5.400-.7z" fill="none" stroke="#000" stroke-width="1" stroke-linejoin="round"/></svg></i></div>
  <div class="btn" style="left:1340px;width:26px"><i class="abs" style="left:4px;top:4px"><svg width="16" height="16" viewBox="0 0 16 16" ><text x="8" y="12.300" text-anchor="middle" font-family="DejaVu Sans,sans-serif" font-weight="bold" font-size="12" fill="#000">?</text></svg></i></div>
</div>
<div id="main">
  <h1><span style="left:0px;letter-spacing:0.33px">Seiteninhalt </span><span style="left:142.5px;letter-spacing:0.3px">auf </span><span style="left:183.75px;letter-spacing:-0.4px">Seite </span><span style="left:246.9px;letter-spacing:0.27px">"Wer" </span><span style="left:318.4px;letter-spacing:0.19px">bearbeiten</span></h1>
  <div id="tabs"><div class="tab act">Allgemein</div><div class="tab2">Settings</div></div>
  <div id="panel">
    <div class="lbl" style="left:12px;top:15px">Headercontent Item</div>
    <div class="btn" id="neu"><i class="abs" style="left:8px;top:9px"><svg width="12" height="12" viewBox="0 0 12 12" ><path d="M6 1v10M1 6h10" stroke="#000" stroke-width="1.900"/></svg></i><span style="left:26px">Neu anlegen</span></div>
    <div id="it1"><i class="abs" style="left:8px;top:14.500px"><svg width="8" height="8" viewBox="0 0 8 8" ><path d="M1.500 0L6.300 4 1.500 8z" fill="#444"/></svg></i><i class="abs" style="left:20px;top:10px"><svg width="16" height="16" viewBox="0 0 16 16" ><rect x=".5" y=".5" width="15" height="15" fill="#fff" stroke="#b9b9b9" stroke-width="1"/><rect x="2" y="2" width="12" height="12" fill="#c5d9f1"/><path d="M12 2h2v2z" fill="#fff"/><path d="M11.500 2v2.500H14" fill="#fff"/><path d="M4.800 8.300c0-1.100.8-1.700 1.700-1.700.4-1 1.200-1.300 2-1.300 1.100 0 2 .8 2 2 .8.100 1.200.6 1.200 1.200H4.800z" fill="#fff"/><path d="M2 14c1.300-1.900 3.300-3 5.600-3 2.400 0 4.400 1.100 5.700 3z" fill="#4aa83c"/></svg></i><span>1. Slider</span><div class="cb" style="left:1152px;top:5px"><i class="abs" style="left:4px;top:4px"><svg width="16" height="16" viewBox="0 0 16 16" ><rect x="0" y="3" width="16" height="10" rx="5" fill="#000"/><circle cx="11.200" cy="8" r="3" fill="#eee"/></svg></i></div><div class="cb" style="left:1177px;top:5px"><i class="abs" style="left:4px;top:4px"><svg width="16" height="16" viewBox="0 0 16 16" ><path d="M2.200 3.600h11.600" stroke="#000" stroke-width="1.300"/><path d="M5.700 3.300V1.700h4.600v1.600" fill="none" stroke="#000" stroke-width="1.100"/><path d="M3.500 4l.5 10.300h8l.5-10.300" fill="none" stroke="#000" stroke-width="1.300"/><path d="M6.100 5.800v6.800M8 5.800v6.800M9.900 5.800v6.800" stroke="#000" stroke-width=".8"/></svg></i></div><div class="cb" style="left:1203px;top:5px"><i class="abs" style="left:4px;top:4px"><svg width="16" height="16" viewBox="0 0 16 16" ><text x="8" y="13.600" text-anchor="middle" font-family="DejaVu Sans Mono,Liberation Mono,monospace" font-weight="bold" font-size="14" fill="#000">i</text></svg></i></div><div class="cb" style="left:1228px;top:5px"><i class="abs" style="left:4px;top:4px"><svg width="16" height="16" viewBox="0 0 16 16" ><path d="M8 3v10M3 8h10" stroke="#000" stroke-width="1.900"/></svg></i></div><div class="cb dis" style="left:1253px;top:5px"></div><div class="cb dis" style="left:1278px;top:5px"></div></div>
    <div id="it2">
      <div id="it2h"><i class="abs" style="left:7.500px;top:15.500px"><svg width="8" height="8" viewBox="0 0 8 8" ><path d="M0 1.800h7.600L3.800 6z" fill="#444"/></svg></i><i class="abs" style="left:20px;top:10px"><svg width="16" height="16" viewBox="0 0 16 16" ><rect x=".5" y=".5" width="15" height="15" fill="#fff" stroke="#b9b9b9" stroke-width="1"/><rect x="2" y="2" width="12" height="12" fill="#c5d9f1"/><path d="M12 2h2v2z" fill="#fff"/><path d="M11.500 2v2.500H14" fill="#fff"/><path d="M4.800 8.300c0-1.100.8-1.700 1.700-1.700.4-1 1.200-1.300 2-1.300 1.100 0 2 .8 2 2 .8.100 1.200.6 1.200 1.200H4.800z" fill="#fff"/><path d="M2 14c1.300-1.900 3.300-3 5.600-3 2.400 0 4.400 1.100 5.700 3z" fill="#4aa83c"/></svg></i><span>[Kein Titel]</span><div class="cb" style="left:1152px;top:5px"><i class="abs" style="left:4px;top:4px"><svg width="16" height="16" viewBox="0 0 16 16" ><rect x="0" y="3" width="16" height="10" rx="5" fill="#000"/><circle cx="11.200" cy="8" r="3" fill="#eee"/></svg></i></div><div class="cb" style="left:1177px;top:5px"><i class="abs" style="left:4px;top:4px"><svg width="16" height="16" viewBox="0 0 16 16" ><path d="M2.200 3.600h11.600" stroke="#000" stroke-width="1.300"/><path d="M5.700 3.300V1.700h4.600v1.600" fill="none" stroke="#000" stroke-width="1.100"/><path d="M3.500 4l.5 10.300h8l.5-10.300" fill="none" stroke="#000" stroke-width="1.300"/><path d="M6.100 5.800v6.800M8 5.800v6.800M9.900 5.800v6.800" stroke="#000" stroke-width=".8"/></svg></i></div><div class="cb dis" style="left:1203px;top:5px"></div><div class="cb" style="left:1228px;top:5px"><i class="abs" style="left:4px;top:4px"><svg width="16" height="16" viewBox="0 0 16 16" ><path d="M8 3v10M3 8h10" stroke="#000" stroke-width="1.900"/></svg></i></div><div class="cb dis" style="left:1253px;top:5px"></div><div class="cb dis" style="left:1278px;top:5px"></div></div>
      <div class="sec" style="top:37px;height:97px">
        <div class="lbl" style="left:12px;top:15px">Title</div>
        <div class="inp" style="left:12px;top:47px;width:804px"></div>
      </div>
      <div class="sec" style="top:134px;height:436px">
        <div class="lbl" style="left:12px;top:15px">Description Text</div>
        <div id="cke">
          <div id="cketop"><i class="abs" style="left:14px;top:12px"><svg width="16" height="16" viewBox="0 0 16 16" ><text x="1" y="12" font-family="Liberation Sans,sans-serif" font-style="italic" font-weight="bold" font-size="14" fill="#484848">T</text><path d="M.800 13.700h7" stroke="#484848" stroke-width="1"/><path d="M9.700 10.700l4.300 4.300M14 10.700l-4.300 4.300" stroke="#484848" stroke-width="1.300"/></svg></i><i class="abs" style="left:243px;top:12px"><svg width="16" height="16" viewBox="0 0 16 16" ><rect x="1.300" y="4.300" width="8.400" height="6" rx="3" fill="none" stroke="#484848" stroke-width="1.400"/><rect x="6.300" y="4.300" width="8.400" height="6" rx="3" fill="none" stroke="#484848" stroke-width="1.400"/><path d="M4.500 7.300h7" stroke="#484848" stroke-width="1.400"/></svg></i><i class="abs" style="left:271px;top:12px"><svg width="16" height="16" viewBox="0 0 16 16" ><rect x="1.300" y="4.300" width="8.400" height="6" rx="3" fill="none" stroke="#c9c9c9" stroke-width="1.400"/><rect x="6.300" y="4.300" width="8.400" height="6" rx="3" fill="none" stroke="#c9c9c9" stroke-width="1.400"/><path d="M4.500 7.300h7" stroke="#c9c9c9" stroke-width="1.400"/><path d="M9.300 9.300h6.700v6.700H9.300z" fill="#f8f8f8"/><path d="M10.300 10.500l4.200 4.200M14.500 10.500l-4.200 4.200" stroke="#c9c9c9" stroke-width="1.300"/></svg></i><i class="abs" style="left:298px;top:12px"><svg width="16" height="16" viewBox="0 0 16 16" ><rect x=".5" y="1.700" width="15" height="12.800" fill="none" stroke="#484848" stroke-width="1.200"/><rect x=".5" y="1.700" width="15" height="3.200" fill="#484848"/><path d="M5.500 4.500v10M10.500 4.500v10M.5 9.700h15" stroke="#484848" stroke-width="1.200"/></svg></i><i class="abs" style="left:339px;top:12px"><svg width="16" height="16" viewBox="0 0 16 16" ><path d="M1.700 3.300h10M1.700 6.300h12.200M1.700 9.300h10M1.700 12.300h12.200" stroke="#484848" stroke-width="1.600"/></svg></i><i class="abs" style="left:367px;top:12px"><svg width="16" height="16" viewBox="0 0 16 16" ><path d="M3.300 3.300h9M1.700 6.300h12.200M3.300 9.300h9M1.700 12.300h12.200" stroke="#484848" stroke-width="1.600"/></svg></i><i class="abs" style="left:395px;top:12px"><svg width="16" height="16" viewBox="0 0 16 16" ><path d="M4 3.300h10M1.800 6.300h12.200M4 9.300h10M1.800 12.300h12.200" stroke="#484848" stroke-width="1.600"/></svg></i><i class="abs" style="left:428px;top:12px"><svg width="16" height="16" viewBox="0 0 16 16" ><text x="8.500" y="13.200" text-anchor="middle" font-family="Liberation Sans,sans-serif" font-weight="bold" font-size="15.500" fill="#484848">B</text></svg></i><i class="abs" style="left:456px;top:12px"><svg width="16" height="16" viewBox="0 0 16 16" ><text x="8.500" y="13.200" text-anchor="middle" font-family="Liberation Serif,serif" font-style="italic" font-weight="bold" font-size="16" fill="#484848">I</text></svg></i><i class="abs" style="left:484px;top:12px"><svg width="16" height="16" viewBox="0 0 16 16" ><text x="8.300" y="12" text-anchor="middle" font-family="Liberation Sans,sans-serif" font-weight="bold" font-size="13.500" fill="#484848">U</text><path d="M2.800 14.300h11" stroke="#484848" stroke-width="1"/></svg></i><i class="abs" style="left:512px;top:12px"><svg width="16" height="16" viewBox="0 0 16 16" ><text x="8.200" y="13" text-anchor="middle" font-family="Liberation Sans,sans-serif" font-weight="bold" font-size="15" fill="#484848">S</text><path d="M1.700 8.400h13" stroke="#484848" stroke-width="1"/></svg></i><i class="abs" style="left:540px;top:12px"><svg width="16" height="16" viewBox="0 0 16 16" ><path d="M4.200 2.700a2.600 2.600 0 012.600 2.600c0 3.200-1.700 5.800-4.900 7.200l-.6-1c1.800-1 2.700-2.200 2.900-3.600a2.600 2.600 0 010-5.200zM11.700 2.700a2.600 2.600 0 012.600 2.600c0 3.200-1.700 5.800-4.900 7.200l-.6-1c1.800-1 2.700-2.200 2.900-3.600a2.600 2.600 0 010-5.200z" fill="#484848"/></svg></i><i class="abs" style="left:573px;top:12px"><svg width="16" height="16" viewBox="0 0 16 16" ><path d="M6 3.300h8.500M6 5.800h8.500M6 10.700h8.500M6 13.200h8.500" stroke="#484848" stroke-width="1.100"/><path d="M2.300 3.300l1.300-1v4.700" fill="none" stroke="#484848" stroke-width="1.100"/><path d="M2 10h2.500v1.700H2.200v1.900h2.500" fill="none" stroke="#484848" stroke-width="1"/></svg></i><i class="abs" style="left:601px;top:12px"><svg width="16" height="16" viewBox="0 0 16 16" ><circle cx="3.500" cy="4.300" r="1.900" fill="#484848"/><circle cx="3.500" cy="11.700" r="1.900" fill="#484848"/><path d="M7.500 3.100h8M7.500 5.600h8M7.500 10.500h8M7.500 13h8" stroke="#484848" stroke-width="1.100"/></svg></i><i class="abs" style="left:629px;top:12px"><svg width="16" height="16" viewBox="0 0 16 16" ><path d="M8 2.500h7.500M8 5.300h5.500M8 8h7.500M8 10.800h5.500M8 13.500h7.500" stroke="#484848" stroke-width="1.100"/><path d="M6 1.500v13" stroke="#484848" stroke-width="1" stroke-dasharray="1.200 1.200"/><path d="M.8 8h3" stroke="#484848" stroke-width="1"/><path d="M3.300 6.200L5.300 8l-2 1.800z" fill="#484848"/></svg></i><i class="abs" style="left:663px;top:12px"><svg width="16" height="16" viewBox="0 0 16 16" ><path d="M3.300 1l5.700 9.500M12.700 1L7 10.500" stroke="#c9c9c9" stroke-width="1.500"/><circle cx="4.500" cy="12.700" r="2" fill="none" stroke="#c9c9c9" stroke-width="1.200"/><circle cx="11.500" cy="12.700" r="2" fill="none" stroke="#c9c9c9" stroke-width="1.200"/></svg></i><i class="abs" style="left:690px;top:12px"><svg width="16" height="16" viewBox="0 0 16 16" ><path d="M2 1h5l2 2v7H2z" fill="none" stroke="#c9c9c9" stroke-width="1.100"/><path d="M6.500 5.500h5.300l2.700 2.700v7.300h-8z" fill="#f8f8f8" stroke="#c9c9c9" stroke-width="1.100"/></svg></i><i class="abs" style="left:718px;top:12px"><svg width="16" height="16" viewBox="0 0 16 16" ><path d="M4.200 2.300H2.800c-.8 0-1.300.5-1.300 1.300v9.600c0 .8.500 1.300 1.300 1.300H5M11 2.300h1.400c.8 0 1.300.5 1.300 1.300V6" fill="none" stroke="#484848" stroke-width="1.200"/><path d="M4.800 3V1.900c0-.6.400-1 1-1h3.600c.6 0 1 .4 1 1V3z" fill="#484848"/><rect x="6.300" y="6.700" width="8.800" height="8.600" rx=".8" fill="#f8f8f8" stroke="#484848" stroke-width="1.200"/><path d="M8.300 9.200h4.800M8.300 11h4.800M8.300 12.800h4.800" stroke="#484848" stroke-width="1"/></svg></i><i class="abs" style="left:746px;top:12px"><svg width="16" height="16" viewBox="0 0 16 16" ><path d="M4.200 2.300H2.800c-.8 0-1.300.5-1.300 1.300v9.600c0 .8.500 1.300 1.300 1.300H5M11 2.300h1.400c.8 0 1.300.5 1.300 1.300V6" fill="none" stroke="#484848" stroke-width="1.200"/><path d="M4.800 3V1.900c0-.6.400-1 1-1h3.600c.6 0 1 .4 1 1V3z" fill="#484848"/><rect x="6.300" y="6.700" width="8.800" height="8.600" rx=".8" fill="#f8f8f8" stroke="#484848" stroke-width="1.200"/><text x="10.700" y="14.200" text-anchor="middle" font-family="Liberation Sans,sans-serif" font-weight="bold" font-size="8" fill="#484848">T</text></svg></i><i class="abs" style="left:774px;top:12px"><svg width="16" height="16" viewBox="0 0 16 16" ><path d="M4.200 2.300H2.800c-.8 0-1.300.5-1.300 1.300v9.600c0 .8.500 1.300 1.300 1.300H5M11 2.300h1.400c.8 0 1.300.5 1.300 1.300V6" fill="none" stroke="#484848" stroke-width="1.200"/><path d="M4.800 3V1.900c0-.6.400-1 1-1h3.600c.6 0 1 .4 1 1V3z" fill="#484848"/><rect x="6.300" y="6.700" width="8.800" height="8.600" rx=".8" fill="#f8f8f8" stroke="#484848" stroke-width="1.200"/><text x="10.700" y="14.200" text-anchor="middle" font-family="Liberation Sans,sans-serif" font-weight="bold" font-size="7.500" fill="#484848">W</text></svg></i><i class="abs" style="left:807px;top:12px"><svg width="16" height="16" viewBox="0 0 16 16" ><path d="M7 2.700v3c4.500 0 7.800 2 8.200 6.300-1.700-2.300-4.300-2.900-8.200-2.900v3.200L.8 7.500z" fill="#c9c9c9"/></svg></i><i class="abs" style="left:835px;top:12px"><svg width="16" height="16" viewBox="0 0 16 16" ><path d="M9 2.700v3c-4.500 0-7.800 2-8.200 6.300 1.700-2.300 4.300-2.900 8.200-2.900v3.200l6.200-4.800z" fill="#c9c9c9"/></svg></i><i class="abs" style="left:863px;top:12px"><svg width="16" height="16" viewBox="0 0 16 16" ><rect x="1.300" y="1.300" width="8.700" height="8.700" fill="none" stroke="#484848" stroke-width="1.100" stroke-dasharray="1.100 1.100"/><rect x="12" y="1.300" width="2.800" height="13.700" rx="1.200" fill="none" stroke="#484848" stroke-width="1.100"/><rect x="1.300" y="12.300" width="8.700" height="2.700" rx="1.200" fill="none" stroke="#484848" stroke-width="1.100"/></svg></i><i class="abs" style="left:891px;top:12px"><svg width="16" height="16" viewBox="0 0 16 16" ><path d="M2.300 1.200h7l3.800 3.800v10.200H2.300z" fill="none" stroke="#484848" stroke-width="1.200" stroke-linejoin="round"/><path d="M6.500 8l-2 2.200 2 2.200M9 8l2 2.200-2 2.200" fill="none" stroke="#484848" stroke-width="1.100"/></svg></i><i class="abs" style="left:975px;top:12px"><svg width="16" height="16" viewBox="0 0 16 16" ><text x="8" y="7.800" text-anchor="middle" font-family="Liberation Sans Narrow,Liberation Sans,sans-serif" font-weight="bold" font-size="8.500" textLength="14.500" lengthAdjust="spacingAndGlyphs" fill="#484848">ABC</text><path d="M4 11.300l2.800 2.700L12.500 8.500" fill="none" stroke="#484848" stroke-width="2"/></svg></i><b class="cks" style="left:38px"></b><b class="cks" style="left:137px"></b><b class="cks" style="left:234px"></b><b class="cks" style="left:330px"></b><b class="cks" style="left:419px"></b><b class="cks" style="left:564px"></b><b class="cks" style="left:653px"></b><b class="cks" style="left:798px"></b><i class="abs" style="left:121px;top:19px"><svg width="8" height="4" viewBox="0 0 8 4" ><path d="M.7.400h6.200L3.800 3.500z" fill="#484848"/></svg></i><i class="abs" style="left:218px;top:19px"><svg width="8" height="4" viewBox="0 0 8 4" ><path d="M.7.400h6.200L3.800 3.500z" fill="#484848"/></svg></i><i class="abs" style="left:317px;top:19px"><svg width="8" height="4" viewBox="0 0 8 4" ><path d="M.7.400h6.200L3.800 3.500z" fill="#484848"/></svg></i><i class="abs" style="left:993px;top:19px"><svg width="8" height="4" viewBox="0 0 8 4" ><path d="M.7.400h6.200L3.800 3.500z" fill="#484848"/></svg></i><span class="ckt" style="left:52px">Format</span><span class="ckt" style="left:149px">Stil</span><span class="ckt" style="left:910px">Quellcode</span></div>
          <div id="ckebody"><i class="abs" style="left:1274px;top:12px"><svg width="10" height="10" viewBox="0 0 10 10" ><path d="M10 0v10H0z" fill="#999"/></svg></i></div>
        </div>
      </div>
      <div class="sec" style="top:570px;height:160px">
        <div class="lbl" style="left:12px;top:15px">Images</div>
        <div class="btn b2" style="left:12px;top:47px;width:136px"><i class="abs" style="left:6px;top:7px"><svg width="16" height="16" viewBox="0 0 16 16" ><path d="M1.600 3h4.600l1.300 1.700h7V13.400H1.600z" fill="none" stroke="#000" stroke-width="1.100" stroke-linejoin="round"/></svg></i><span style="left:26px">Datei hinzufügen</span></div>
        <div class="btn b2" style="left:153px;top:47px;width:241px"><i class="abs" style="left:6px;top:7px"><svg width="16" height="16" viewBox="0 0 16 16" ><path d="M8 1.500L4.300 5.800h2.400v4.400h2.600V5.800h2.400z" fill="#000"/><path d="M4.700 9.600H1.500v4.500h13V9.600h-3.200" fill="none" stroke="#000" stroke-width="1.200"/><path d="M10.500 12.300h1M12.300 12.300h1" stroke="#000" stroke-width="1"/></svg></i><span style="left:26px;letter-spacing:-.03px">Dateien auswählen und hochladen</span></div>
        <div class="lnk" style="left:12px;top:88px">Erlaubte Dateierweiterungen</div>
        <div class="exts"><b style="left:0px;width:28px">GIF</b><b style="left:32px;width:29px">JPG</b><b style="left:65px;width:35px">JPEG</b><b style="left:105px;width:26.5px">TIF</b><b style="left:136px;width:32.5px">TIFF</b><b style="left:173px;width:31.5px">BMP</b><b style="left:209px;width:29.5px">PCX</b><b style="left:243px;width:30.5px">TGA</b><b style="left:278px;width:30.5px">PNG</b><b style="left:313px;width:29.5px">PDF</b><b style="left:347.5px;width:21px">AI</b><b style="left:373.5px;width:30px">SVG</b></div>
      </div>
      <div class="sec" style="top:730px;height:200px;border-bottom:0">
        <div class="leg">Headercontent Position</div>
        <div class="lbl" style="left:12px;top:41px">Accent-Color</div>
        <div class="lbl" style="left:342px;top:41px">Vertical Position</div>
        <div class="lbl" style="left:672px;top:41px">Horizontal Position</div>
        <div class="lbl" style="left:1002px;top:41px">Headercontent Size</div>
        <div class="inp selb" style="left:12px;top:73px;width:300px"><span>primary color</span><i class="abs" style="left:281px;top:11px"><svg width="10" height="8" viewBox="0 0 10 8" ><path d="M1.300 2l3.700 3.700L8.700 2" fill="none" stroke="#000" stroke-width="1.900"/></svg></i></div>
        <div class="inp selb" style="left:342px;top:73px;width:300px"><span>middle</span><i class="abs" style="left:281px;top:11px"><svg width="10" height="8" viewBox="0 0 10 8" ><path d="M1.300 2l3.700 3.700L8.700 2" fill="none" stroke="#000" stroke-width="1.900"/></svg></i></div>
        <div class="inp selb" style="left:672px;top:73px;width:300px"><span>center</span><i class="abs" style="left:281px;top:11px"><svg width="10" height="8" viewBox="0 0 10 8" ><path d="M1.300 2l3.700 3.700L8.700 2" fill="none" stroke="#000" stroke-width="1.900"/></svg></i></div>
        <div class="inp selb" style="left:1002px;top:73px;width:300px"><span>half (50%)</span><i class="abs" style="left:281px;top:11px"><svg width="10" height="8" viewBox="0 0 10 8" ><path d="M1.300 2l3.700 3.700L8.700 2" fill="none" stroke="#000" stroke-width="1.900"/></svg></i></div>
      </div>
    </div>
  </div>
  <div id="red1"></div><div id="red2"></div><div id="red3"></div>
</div>
</body>
</html>
